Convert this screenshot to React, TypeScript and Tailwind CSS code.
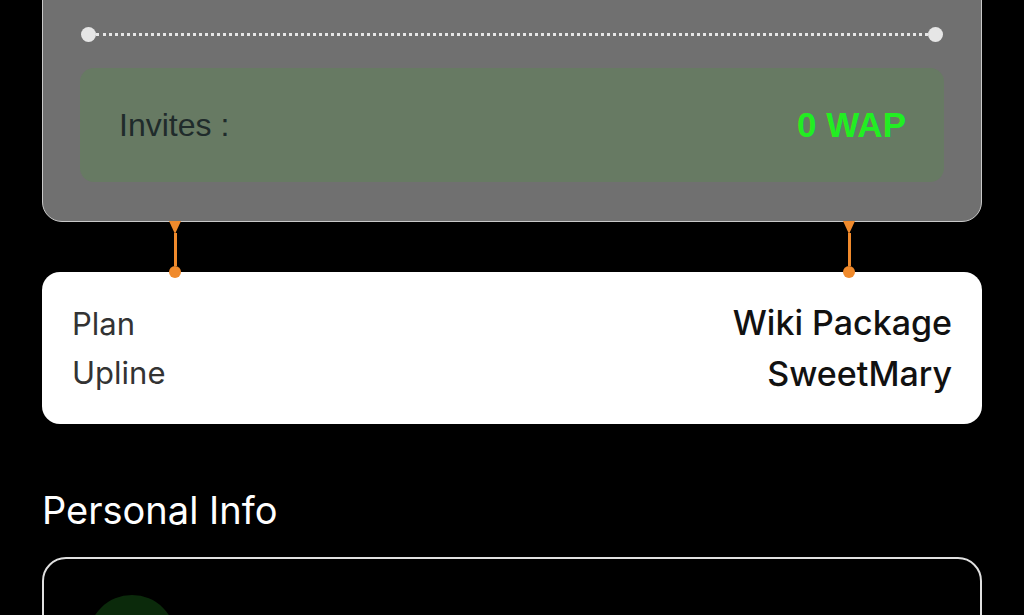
import React from "react";

function Connector() {
    return (
        <div className="relative flex h-full w-[14px] flex-col items-center">
            <svg width="14" height="14" viewBox="0 0 14 14" className="-mt-[1px]">
                <path d="M1 0 L13 0 L7 13 Z" fill="#f08a2c" />
            </svg>
            <div className="-mt-[2px] w-[3px] flex-1 bg-[#f08a2c]" />
            <div className="-mb-[6px] h-[12px] w-[12px] rounded-full bg-[#f08a2c]" />
        </div>
    );
}

export default function App() {
    return (
        <div
            className="min-h-screen w-full overflow-hidden bg-black"
            style={{ fontFamily: "Inter, 'Noto Sans', sans-serif" }}
        >
            <div className="mx-[42px] -mt-[80px]">
                {/* Referral card */}
                <div className="rounded-[20px] border border-[#c9c9c9] bg-[#707070] px-[37px] pb-[39px] pt-[40px]">
                    <div className="flex h-[44px] items-end justify-center gap-10 text-[20px] text-[#8e9aae]">
                        <span>Level 1</span>
                        <span>Level 2</span>
                    </div>
                    <div className="mt-[22px] flex items-center px-[1px]">
                        <div className="h-[15px] w-[15px] rounded-full bg-[#e6e6e6]" />
                        <div className="flex-1 border-t-[3px] border-dotted border-[#e6e6e6]" />
                        <div className="h-[15px] w-[15px] rounded-full bg-[#e6e6e6]" />
                    </div>
                    <div className="mt-[26px] flex h-[114px] items-center justify-between rounded-[14px] bg-[#677a63] pl-[39px] pr-[38px]">
                        <span
                            className="text-[32px] text-[#1f2b2b]"
                            style={{ fontFamily: "'Liberation Sans', Arial, sans-serif" }}
                        >
                            Invites :
                        </span>
                        <span
                            className="text-[35px] font-bold text-[#22ee22]"
                            style={{ fontFamily: "'Liberation Sans', Arial, sans-serif" }}
                        >
                            0 WAP
                        </span>
                    </div>
                </div>

                {/* Connectors */}
                <div className="flex h-[50px] justify-between px-[126px]">
                    <Connector />
                    <Connector />
                </div>

                {/* Plan card */}
                <div className="flex h-[152px] items-center justify-between rounded-[18px] bg-white pl-[30px] pr-[30px]">
                    <div className="flex flex-col gap-[12px] text-[31px] leading-[37px] text-[#333333]">
                        <span>Plan</span>
                        <span>Upline</span>
                    </div>
                    <div className="flex flex-col items-end gap-[12px] text-[34px] font-medium leading-[39px] text-[#111111]">
                        <span>Wiki Package</span>
                        <span>SweetMary</span>
                    </div>
                </div>

                {/* Personal info */}
                <h2 className="mt-[62px] text-[38px] leading-[48px] text-white">Personal Info</h2>
                <div className="mt-[23px] h-[200px] rounded-[24px] border-2 border-[#e0e0e0] px-[44px] pt-[36px]">
                    <div className="h-[88px] w-[88px] rounded-full bg-[#0b2a0b]" />
                </div>
            </div>
        </div>
    );
}
